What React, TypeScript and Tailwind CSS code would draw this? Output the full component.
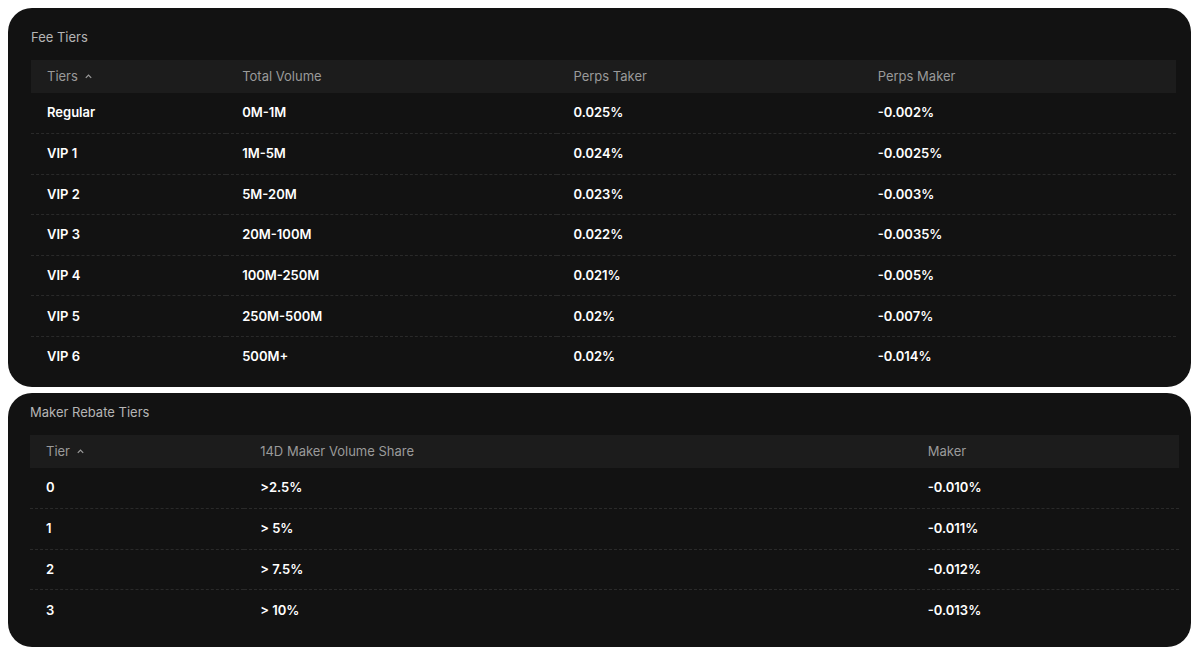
import React from "react";

const Caret = () => (
  <svg width="9" height="9" viewBox="0 0 10 10" className="inline-block ml-1.5 -mt-0.5" fill="none" stroke="#9a9a9a" strokeWidth="1.4"><path d="M2 6.5 5 3.5 8 6.5" /></svg>
);

function Table({ title, cols, widths, rows, pad }: { title: string; cols: string[]; widths: string[]; rows: string[][]; pad: string }) {
  return (
    <div className={`bg-[#121212] rounded-[24px] ${pad}`}>
      <div className="text-[13px] text-[#b5b5b5] h-[20px] leading-[20px] mb-[13px]">{title}</div>
      <table className="w-full table-fixed border-collapse">
        <colgroup>{widths.map((w, i) => <col key={i} style={{ width: w }} />)}</colgroup>
        <thead>
          <tr className="bg-[#1c1c1c] h-[33px]">
            {cols.map((c, i) => (
              <th key={i} className="text-left font-normal text-[13px] text-[#9a9a9a] pl-4">{c}{i === 0 && <Caret />}</th>
            ))}
          </tr>
        </thead>
        <tbody>
          {rows.map((r, ri) => (
            <tr key={ri} className={`h-[40.6px] ${ri < rows.length - 1 ? "border-b border-dashed border-[#2a2a2a]" : ""}`}>
              {r.map((c, i) => <td key={i} className="pl-4 text-[13px] font-semibold text-white">{c}</td>)}
            </tr>
          ))}
        </tbody>
      </table>
    </div>
  );
}

export default function App() {
  return (
    <div className="bg-white w-[1199px] h-[651px] p-[8px] flex flex-col gap-[6px]" style={{ fontFamily: "Inter, 'Noto Sans', sans-serif" }}>
      <Table
        title="Fee Tiers"
        pad="pt-[19px] pb-[10px] pl-[23px] pr-[15px]"
        cols={["Tiers", "Total Volume", "Perps Taker", "Perps Maker"]}
        widths={["195px", "331px", "304px", "314px"]}
        rows={[
          ["Regular", "0M-1M", "0.025%", "-0.002%"],
          ["VIP 1", "1M-5M", "0.024%", "-0.0025%"],
          ["VIP 2", "5M-20M", "0.023%", "-0.003%"],
          ["VIP 3", "20M-100M", "0.022%", "-0.0035%"],
          ["VIP 4", "100M-250M", "0.021%", "-0.005%"],
          ["VIP 5", "250M-500M", "0.02%", "-0.007%"],
          ["VIP 6", "500M+", "0.02%", "-0.014%"],
        ]}
      />
      <Table
        title="Maker Rebate Tiers"
        pad="pt-[9px] pb-[16px] pl-[22px] pr-[12px] flex-1"
        cols={["Tier", "14D Maker Volume Share", "Maker"]}
        widths={["214px", "667px", "267px"]}
        rows={[
          ["0", ">2.5%", "-0.010%"],
          ["1", "> 5%", "-0.011%"],
          ["2", "> 7.5%", "-0.012%"],
          ["3", "> 10%", "-0.013%"],
        ]}
      />
    </div>
  );
}
